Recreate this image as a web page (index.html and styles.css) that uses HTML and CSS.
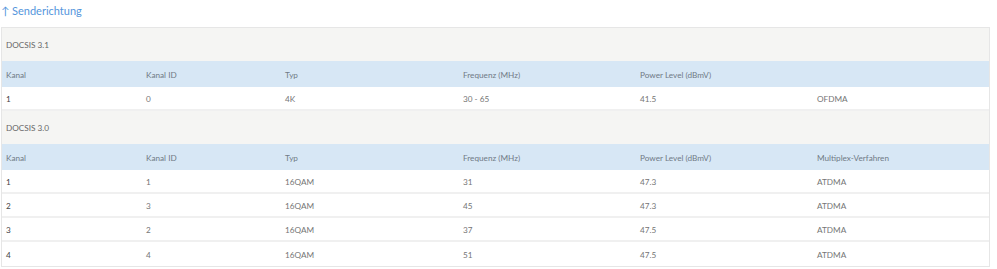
FILE: index.html
```html
<!DOCTYPE html>
<html lang="de">
<head>
<meta charset="utf-8">
<link rel="stylesheet" href="styles.css">
</head>
<body>
<div class="page">
  <h2 class="title">↑ Senderichtung</h2>
  <div class="table">
    <div class="group">DOCSIS 3.1</div>
    <div class="row head">
      <span>Kanal</span><span>Kanal ID</span><span>Typ</span><span>Frequenz (MHz)</span><span>Power Level (dBmV)</span><span></span>
    </div>
    <div class="row">
      <span class="b">1</span><span>0</span><span>4K</span><span>30 - 65</span><span>41.5</span><span>OFDMA</span>
    </div>
    <div class="group">DOCSIS 3.0</div>
    <div class="row head">
      <span>Kanal</span><span>Kanal ID</span><span>Typ</span><span>Frequenz (MHz)</span><span>Power Level (dBmV)</span><span>Multiplex-Verfahren</span>
    </div>
    <div class="row">
      <span class="b">1</span><span>1</span><span>16QAM</span><span>31</span><span>47.3</span><span>ATDMA</span>
    </div>
    <div class="row">
      <span class="b">2</span><span>3</span><span>16QAM</span><span>45</span><span>47.3</span><span>ATDMA</span>
    </div>
    <div class="row">
      <span class="b">3</span><span>2</span><span>16QAM</span><span>37</span><span>47.5</span><span>ATDMA</span>
    </div>
    <div class="row last">
      <span class="b">4</span><span>4</span><span>16QAM</span><span>51</span><span>47.5</span><span>ATDMA</span>
    </div>
  </div>
</div>
</body>
</html>
```
FILE: styles.css
```css
* { box-sizing: border-box; }
html, body { margin: 0; padding: 0; background: #fff; }
body {
  font-family: "Lato", "Open Sans", sans-serif;
  color: #757575;
}
.page {
  width: 990px;
  padding: 0 0 0 1px;
}
.title {
  margin: 0;
  height: 27px;
  padding-top: 3px;
  font-size: 11px;
  font-weight: 400;
  color: #5596dc;
  line-height: 15px;
}
.table {
  border: 1px solid #e6e6e6;
  width: 989px;
  font-size: 8.2px;
}
.group {
  background: #f5f5f3;
  height: 33px;
  line-height: 33px;
  padding: 1px 0 0 4px;
  color: #666;
}
.row {
  display: grid;
  grid-template-columns: 140px 139px 178px 177px 177px 1fr;
  height: 24px;
  align-items: center;
  border-bottom: 2px solid #f0f0f0;
  padding-top: 1px;
}
.row span { padding-left: 4px; }
.row.head {
  background: #d7e7f5;
  height: 26px;
  border-bottom: none;
  color: #707a85;
}
.row.last { border-bottom: none; }
.b { color: #444; }
```
